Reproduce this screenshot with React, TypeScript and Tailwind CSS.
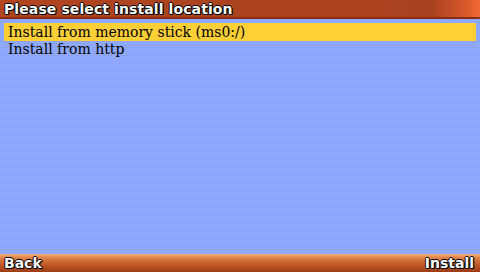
export default function App() {
  const items = ["Install from memory stick (ms0:/)", "Install from http"]
  const selected = 0

  return (
    <div className="flex h-[272px] w-[480px] flex-col overflow-hidden bg-[repeating-linear-gradient(180deg,#93abff_0px,#93abff_1px,#8ba4fa_1px,#8ba4fa_2px)]">
      <div className="flex h-[19px] items-center border-b-2 border-[#8c2c0e] bg-[linear-gradient(90deg,#b04520_0%,#a94220_90%,#d8582a_97%,#f06a34_100%)] pl-1 font-['DejaVu_Sans',sans-serif] text-[14px] font-bold leading-none tracking-[0.1px] text-white [text-shadow:1px_1px_0_#000,-1px_0_0_#000,0_-1px_0_#000,1px_0_0_#000,0_1px_0_#000]">
        Please select install location
      </div>

      <div className="flex flex-1 flex-col px-1 pt-[4px] font-['DejaVu_Serif',serif] text-[14px] leading-none text-black">
        {items.map((item, i) => (
          <div
            key={item}
            className={
              i === selected
                ? "flex h-[18px] items-center bg-[#ffd035] pl-1"
                : "flex h-[16px] items-center pl-1"
            }
          >
            {item}
          </div>
        ))}
      </div>

      <div className="flex h-[18px] items-center justify-between bg-[linear-gradient(180deg,#f2b07a_0%,#e0844c_20%,#c8602c_50%,#b04a1e_80%,#9a3c16_100%)] pl-1 pr-[6px] font-['DejaVu_Sans',sans-serif] text-[14px] font-bold leading-none text-white [text-shadow:1px_1px_0_#000,-1px_0_0_#000,0_-1px_0_#000,1px_0_0_#000,0_1px_0_#000]">
        <span>Back</span>
        <span>Install</span>
      </div>
    </div>
  )
}
